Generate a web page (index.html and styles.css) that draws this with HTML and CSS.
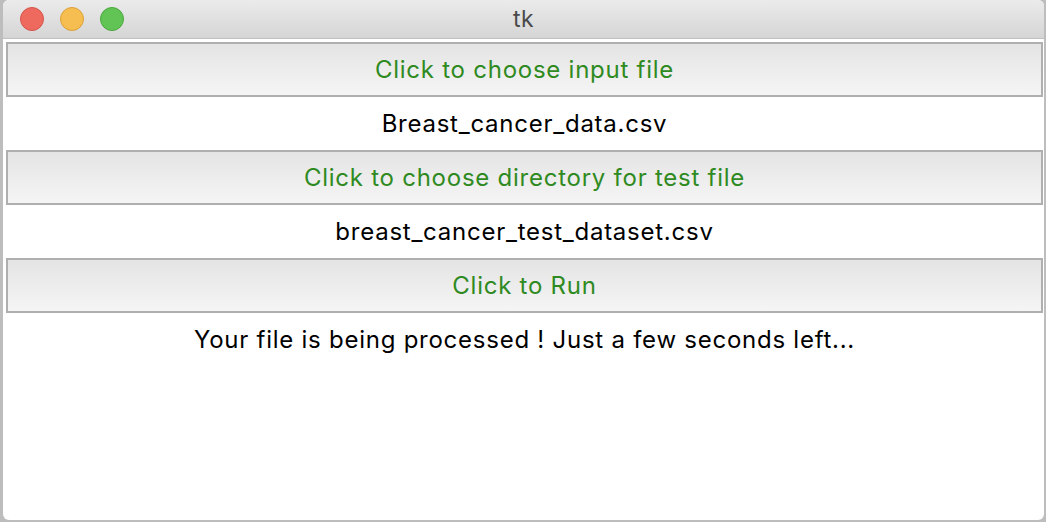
FILE: index.html
```html
<!DOCTYPE html>
<html>
<head>
<meta charset="utf-8">
<link rel="stylesheet" href="styles.css">
</head>
<body>
<div class="window">
  <div class="titlebar">
    <div class="lights">
      <span class="light red"></span>
      <span class="light yellow"></span>
      <span class="light green"></span>
    </div>
    <div class="title">tk</div>
  </div>
  <div class="content">
    <div class="btn">Click to choose input file</div>
    <div class="label">Breast_cancer_data.csv</div>
    <div class="btn">Click to choose directory for test file</div>
    <div class="label">breast_cancer_test_dataset.csv</div>
    <div class="btn">Click to Run</div>
    <div class="label">Your file is being processed ! Just a few seconds left...</div>
  </div>
</div>
</body>
</html>
```
FILE: styles.css
```css
html, body {
  margin: 0;
  padding: 0;
  width: 1046px;
  height: 522px;
  overflow: hidden;
  background: #bdbdbd;
}
.window {
  margin-left: 3px;
  width: 1041px;
  height: 520px;
  background: #ffffff;
  border-radius: 6px;
  overflow: hidden;
  display: flex;
  flex-direction: column;
  font-family: Inter, "Liberation Sans", sans-serif;
}
.titlebar {
  height: 38px;
  flex: none;
  background: linear-gradient(#ebebeb, #d5d5d5);
  border-bottom: 1px solid #c0c0c0;
  position: relative;
  display: flex;
  align-items: center;
}
.lights {
  display: flex;
  gap: 16px;
  padding-left: 17px;
}
.light {
  width: 24px;
  height: 24px;
  border-radius: 50%;
  box-sizing: border-box;
}
.red { background: #ee6a5f; border: 1px solid #d5544a; }
.yellow { background: #f6be50; border: 1px solid #dca03a; }
.green { background: #61c454; border: 1px solid #4ca73f; }
.title {
  position: absolute;
  left: 0;
  right: 0;
  top: 0;
  bottom: 0;
  display: flex;
  align-items: center;
  justify-content: center;
  font-size: 23px;
  letter-spacing: 0.5px;
  color: #4a4a4a;
}
.content {
  padding: 3px 1px 0 3px;
  display: flex;
  flex-direction: column;
}
.btn {
  height: 55px;
  box-sizing: border-box;
  border: 2px solid #afafaf;
  background: linear-gradient(#e4e4e4, #f5f5f5);
  color: #2f8a22;
  font-size: 24px;
  letter-spacing: 0.75px;
  display: flex;
  align-items: center;
  justify-content: center;
}
.label {
  height: 53px;
  display: flex;
  align-items: center;
  justify-content: center;
  font-size: 24px;
  letter-spacing: 0.75px;
  color: #000;
}
```
